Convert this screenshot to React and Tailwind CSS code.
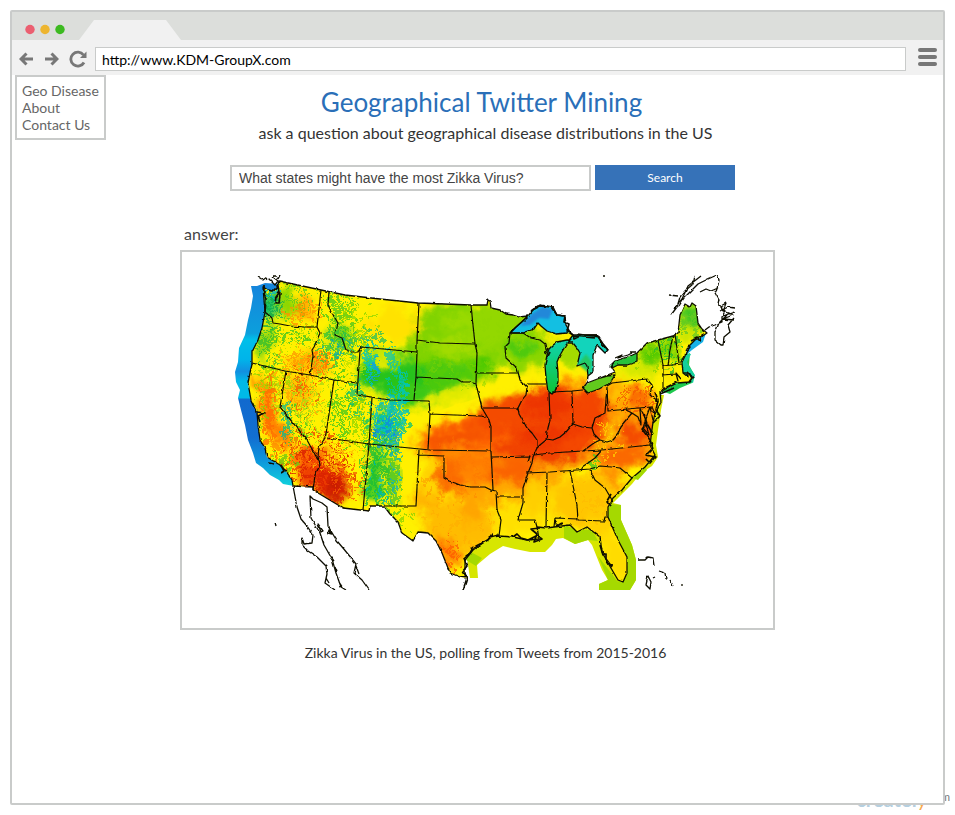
import React from "react";

const LAND =
  "M263 287L268 290L273 291L277 288L279 281L321 290L345 295L380 299L418 303L471 305L487 305L488 300L490 301L491 308L500 310L506 314L513 315L519 317L528 316L533 310L540 305L553 307L557 315L565 316L566 325L570 332L573 335L597 335L602 343L608 350L605 353L597 345L593 355L593 372L588 376L587 383L600 378L615 372L611 366L615 361L628 357L637 353L641 349L647 343L658 340L673 336L678 333L680 315L685 304L690 307L692 303L696 306L698 323L702 329L707 333L701 337L695 340L687 348L685 356L682 362L683 373L688 377L688 372L693 378L690 382L677 383L660 392L661 402L655 414L653 422L650 445L655 455L645 467L638 473L632 478L622 490L613 498L608 507L608 517L618 540L627 557L627 573L623 582L618 580L608 563L602 552L600 537L587 527L577 532L570 525L554 527L547 528L537 527L539 539L527 540L513 537L498 536L490 538L473 550L465 560L465 573L467 578L460 577L450 573L446 563L442 553L436 541L428 533L418 532L413 541L402 533L398 522L390 514L384 506L370 506L369 511L343 508L313 490L313 487L293 486L292 480L286 471L280 465L267 457L265 448L260 440L258 425L257 412L251 400L248 383L252 363L252 352L258 340L262 328L265 312L264 300Z";

const STATES = [
  "M265 312L272 318L273 323L280 324L290 326L305 327L317 327",
  "M321 290L317 327L320 333L314 347L312 350L313 356L310 375",
  "M252 363L285 371L310 375L334 380L357 383",
  "M329 292L328 305L332 313L338 323L335 335L342 338L346 350L351 352L358 352L361 347L417 352",
  "M360 350L357 395L390 400L429 401L430 414L428 449",
  "M419 303L417 340L417 352L416 377L414 400",
  "M417 340L440 343L475 344",
  "M471 305L473 325L475 344L477 352L476 384L480 400L482 408L489 420L491 427L491 451L493 490",
  "M416 377L457 379L462 382L470 382L476 384",
  "M476 373L518 373",
  "M430 414L480 416L486 417",
  "M482 408L517 408L519 412",
  "M327 438L369 444L430 450L491 451",
  "M286 371L280 407L307 440L318 460",
  "M334 380L326 434L325 438L319 447L318 457L320 465L315 475L313 490",
  "M372 397L369 444L363 510",
  "M357 395L372 397",
  "M419 450L416 506L384 506",
  "M419 455L444 456L444 478L449 481L455 483L460 485L470 487L485 487L491 490L496 491L497 510L501 520L499 536",
  "M497 497L521 497",
  "M492 457L530 456L528 462",
  "M510 333L509 343L505 347L506 358L517 368L520 380L527 387L526 395L522 400L518 408L519 414L527 428L532 433L537 440L537 448L533 457L532 463L528 473L523 488L523 503L518 520L535 520L537 527",
  "M510 333L516 327L528 316",
  "M510 333L523 333L531 338L540 340L545 344L546 350",
  "M527 384L546 384",
  "M549 392L550 420L547 432L546 440L540 445L537 448",
  "M546 439L553 440L560 437L566 432L573 424L582 427L592 428L595 418L605 413L607 387",
  "M572 391L573 424",
  "M552 392L572 391L583 390",
  "M607 387L608 411L638 408L652 407L655 414",
  "M607 386L612 383L647 379L652 385L650 395L658 401",
  "M592 428L594 434L600 440L607 442L613 440L618 434L621 426L626 420L632 413L626 410",
  "M534 455L550 453L583 451L602 450L650 445",
  "M583 451L594 443L600 440",
  "M526 473L550 472L590 469L600 466L612 467L620 468L632 478",
  "M602 450L595 458L588 463L582 467L580 470",
  "M590 470L595 480L605 488L612 500",
  "M547 473L546 527",
  "M570 471L577 505L578 520L604 521L605 517L608 517",
  "M554 527L555 518L578 519",
  "M658 340L663 365L663 388",
  "M673 336L670 350L668 366",
  "M675 334L679 363",
  "M662 366L682 364",
  "M662 375L676 374L678 381L676 373L681 379",
  "M632 413L638 417L641 425L640 408L646 419L643 428L649 435L645 421L650 407L653 420",
];

const LAKES = {
  superior:
    "M510 333L515 328L523 321L528 316L533 310L537 308L540 305L553 307L557 315L565 316L566 325L570 332L567 333L556 334L547 331L541 326L538 323L534 329L523 333Z",
  michigan:
    "M557 342L567 340L571 340L566 345L563 350L559 357L557 362L558 372L558 383L555 391L552 394L548 392L546 378L545 365L547 355L549 349L552 346Z",
  huron:
    "M573 335L597 335L602 343L608 350L605 353L597 345L593 355L593 372L588 376L587 366L585 363L577 366L580 353L577 348L573 343L567 343Z",
  erie: "M583 388L587 383L600 378L607 376L615 375L610 383L599 389L588 393Z",
  ontario: "M610 366L615 361L628 357L637 353L637 362L627 365L618 365L612 368Z",
};

const SHORES = [
  "M264 285L264 293L266 299L265 312M273 291L278 286L279 293L276 297L275 303L279 303L280 294L277 292",
  "M531 311L538 306L551 307L557 315L565 316L564 322L569 324L567 331L573 335L574 339L582 335L597 335L603 344L608 350",
  "M545 354L548 348M547 358L550 352M573 336L595 338M577 334L600 337",
  "M257 412L264 413L258 416L260 422M281 465L284 471L281 473M269 463L274 464",
  "M691 341L697 338L700 341L703 333M686 352L690 347L688 345M683 373L689 373L692 378L689 382M661 390L677 382M660 394L674 388",
  "M655 392L658 400L656 410L660 416L653 423M644 414L647 424L642 429L650 440L653 448L646 455L655 457L650 463L646 459",
  "M647 424L653 434M611 494L607 501L611 506M540 528L531 529L537 534L534 542L542 539L536 535M513 537L517 534L521 538L528 540L536 536",
  "M499 535L490 537L492 534L488 540L478 545L473 548L470 553L464 558L467 566L463 571L467 578L463 590",
  "M555 520L557 526L562 523M600 545L603 555L606 553L606 559L612 567",
];

const ABROAD = [
  "M257 276L263 280L267 277M268 278L275 285L278 281L273 277M278 279L280 275M273 276L278 276",
  "M293 486L297 507L301 519L307 526L313 535L312 543L304 544L302 538L302 545L308 551L317 557L326 566L327 574L325 583L335 590",
  "M313 499L310 496L311 518L320 533L324 545L332 559L336 573L341 587L346 590",
  "M313 499L322 503L327 507L328 526L337 541L343 548L352 559L356 564L354 573L362 580L369 590",
  "M318 524L323 531L321 532ZM329 530L332 534L328 533ZM331 557L334 561M335 567L337 572M356 566L359 574M326 578L329 583M339 582L343 588",
  "M275 522L276 526M603 276L605 276",
  "M671 315L677 307L680 297L685 291L693 284L695 276M674 309L682 299L688 286L701 276M679 306L684 298L690 292L698 284L708 279L717 275L719 280L718 285L716 292M700 292L706 289L711 291L718 288M714 291L719 300L718 305L721 306L725 311L722 317L722 322L715 325L709 327L705 330",
  "M669 295L678 296M721 306L726 303L723 311L733 315L723 319L734 320M720 311L728 307L735 308M723 316L734 312M727 315L719 323L715 333L715 340L721 345L723 345L724 337L730 332L728 325L734 318",
  "M615 358L622 355L618 358L628 355L632 353M636 352L630 352",
  "M638 560L645 560L648 557L653 558L654 566M659 571L665 573L666 579M670 580L673 586M648 576L646 585L650 589L651 582ZM653 578L655 577M682 584L682 586",
];

// [cx, cy, rx, ry, colour, rotation]
const FIELD = [
  [455, 345, 50, 45, "#7fd300", 0],
  [500, 325, 40, 25, "#93d800", 0],
  [440, 380, 38, 18, "#4cc90a", 0],
  [390, 374, 32, 22, "#28c31a", 0],
  [415, 395, 22, 12, "#3bc818", 0],
  [455, 347, 26, 10, "#a2dc00", 0],
  [525, 352, 30, 22, "#8cd600", 0],
  [521, 347, 12, 8, "#48c90c", 0],
  [483, 365, 10, 7, "#45c800", 0],
  [454, 322, 16, 8, "#9cdb00", 0],
  [386, 359, 14, 9, "#e5ec00", 0],
  [570, 355, 20, 15, "#a4db00", 0],
  [500, 388, 62, 11, "#fff000", -12],
  [575, 375, 40, 9, "#fff000", 0],
  [445, 405, 30, 8, "#fff000", -18],
  [455, 396, 22, 5, "#d6e800", -18],
  [500, 470, 65, 36, "#ffa800", 0],
  [590, 420, 75, 42, "#ffa200", 0],
  [535, 425, 75, 30, "#ff7800", -8],
  [465, 437, 52, 17, "#ff6600", -10],
  [550, 420, 55, 30, "#f34700", 0],
  [500, 415, 34, 15, "#f44b00", -20],
  [460, 437, 32, 9, "#f55300", -8],
  [545, 450, 55, 14, "#f14200", 0],
  [590, 405, 18, 16, "#f34400", 0],
  [510, 470, 28, 13, "#fa6400", 0],
  [545, 405, 24, 13, "#ed3600", 0],
  [558, 437, 38, 9, "#ed3500", 0],
  [583, 443, 21, 9, "#f54a00", -15],
  [612, 434, 5, 25, "#ffc800", 35],
  [578, 462, 4, 22, "#ffb800", 45],
  [635, 434, 20, 12, "#f44c00", 15],
  [637, 396, 13, 9, "#fb6b00", 0],
  [619, 395, 11, 9, "#ffc300", 0],
  [624, 456, 27, 10, "#fb6800", -10],
  [610, 480, 20, 12, "#ff9100", 30],
  [642, 368, 28, 10, "#d5e800", 0],
  [653, 352, 17, 11, "#54ca00", 0],
  [671, 349, 6, 15, "#63cd00", 0],
  [690, 318, 11, 16, "#3fc622", 0],
  [690, 334, 10, 12, "#cee600", 20],
  [670, 373, 13, 5, "#ffe500", 0],
  [459, 468, 26, 25, "#ff8b00", 0],
  [447, 475, 15, 17, "#fb6a00", 0],
  [475, 463, 20, 10, "#ff7b00", 0],
  [460, 525, 37, 26, "#ffbc00", 0],
  [425, 500, 18, 16, "#ffb500", 0],
  [448, 553, 10, 16, "#ff7900", -30],
  [472, 505, 11, 20, "#ffa500", 0],
  [520, 518, 28, 17, "#ffe000", 0],
  [535, 497, 13, 20, "#ffcf00", 0],
  [586, 502, 36, 26, "#ffc600", 0],
  [600, 528, 16, 13, "#ffd000", 0],
  [616, 555, 12, 26, "#ffdc00", -20],
  [430, 475, 9, 24, "#ffd400", 0],
  [405, 475, 10, 30, "#fff000", 0],
  [303, 310, 12, 12, "#ffb000", 0],
  [266, 340, 7, 17, "#6fd019", 20],
  [270, 305, 11, 14, "#18c163", 0],
  [287, 302, 8, 17, "#87d500", 0],
  [305, 361, 18, 8, "#ffb400", -20],
  [320, 365, 14, 6, "#ffa300", 35],
  [267, 403, 8, 29, "#ff8300", -15],
  [279, 432, 9, 21, "#ff7b00", -35],
  [298, 390, 14, 17, "#ffc600", 0],
  [340, 335, 11, 13, "#72d121", 0],
  [386, 426, 12, 15, "#3ccb62", 0],
  [376, 475, 9, 27, "#31c726", 8],
  [394, 480, 5, 20, "#7ad314", 0],
  [312, 462, 17, 18, "#fb6500", -35],
  [329, 483, 20, 15, "#e52d00", 25],
  [335, 488, 12, 11, "#c91c00", 0],
  [308, 475, 10, 9, "#ee3c00", 0],
  [395, 325, 29, 17, "#ffe200", 0],
];

// [cx, cy, rx, ry, count, width, height, colour]
const GRAIN = [
  [290, 300, 30, 18, 120, 1, 3, "#5acb1e"],
  [270, 308, 10, 20, 60, 2, 2, "#12a94c"],
  [272, 292, 8, 6, 25, 2, 2, "#00b7c6"],
  [302, 312, 18, 14, 90, 2, 2, "#ff9000"],
  [267, 343, 12, 24, 110, 2, 2, "#35bd2c"],
  [295, 342, 32, 20, 170, 2, 1, "#a8da00"],
  [293, 335, 26, 9, 60, 2, 2, "#3ec41f"],
  [300, 360, 26, 14, 120, 2, 2, "#ff9800"],
  [320, 362, 16, 12, 70, 2, 2, "#ff6f00"],
  [338, 313, 16, 28, 210, 2, 2, "#4bc51d"],
  [338, 347, 22, 18, 160, 2, 2, "#2ec23c"],
  [340, 350, 18, 12, 30, 2, 2, "#00a9ae"],
  [356, 330, 18, 32, 140, 2, 2, "#8ad500"],
  [366, 340, 22, 12, 80, 2, 2, "#2dbf55"],
  [352, 362, 18, 20, 110, 2, 1, "#b4dc00"],
  [370, 362, 6, 22, 90, 2, 2, "#00c6bd"],
  [373, 370, 5, 14, 30, 2, 2, "#0d9edb"],
  [390, 358, 4, 13, 40, 2, 2, "#0cc6a6"],
  [400, 385, 12, 18, 50, 2, 3, "#04c69c"],
  [297, 390, 26, 30, 210, 1, 3, "#ffa300"],
  [306, 400, 34, 40, 260, 1, 4, "#a5d80f"],
  [300, 385, 22, 22, 60, 1, 4, "#f65a00"],
  [272, 378, 18, 16, 100, 2, 2, "#a3d800"],
  [267, 405, 7, 34, 110, 2, 3, "#ff6800"],
  [286, 420, 5, 20, 80, 2, 2, "#0bb78b"],
  [300, 428, 14, 22, 60, 1, 3, "#45c41d"],
  [260, 412, 6, 40, 60, 1, 3, "#88d100"],
  [341, 408, 12, 36, 150, 2, 2, "#40c51c"],
  [354, 397, 9, 22, 80, 2, 2, "#09bd72"],
  [359, 420, 12, 26, 110, 2, 2, "#8bd400"],
  [386, 423, 21, 28, 270, 2, 2, "#11c370"],
  [388, 420, 15, 26, 170, 2, 3, "#00bccc"],
  [386, 432, 14, 15, 70, 2, 2, "#1687df"],
  [401, 397, 5, 34, 100, 2, 3, "#06c4c0"],
  [375, 472, 14, 40, 210, 2, 3, "#1dbd36"],
  [392, 477, 8, 40, 130, 2, 3, "#4cc725"],
  [377, 485, 10, 30, 24, 2, 3, "#00b9b2"],
  [393, 463, 6, 36, 34, 2, 3, "#15b1b7"],
  [397, 519, 14, 12, 18, 2, 2, "#88d400"],
  [310, 458, 34, 28, 280, 2, 2, "#ed3c00"],
  [322, 475, 29, 28, 260, 2, 2, "#d92300"],
  [338, 455, 28, 16, 120, 2, 2, "#ffbd00"],
  [348, 482, 15, 18, 80, 2, 2, "#f35a00"],
  [279, 446, 16, 20, 80, 2, 2, "#ff8a00"],
  [282, 463, 15, 12, 70, 2, 2, "#68cd13"],
  [455, 470, 34, 30, 70, 3, 3, "#fc7600"],
  [455, 525, 40, 34, 70, 3, 3, "#ffa200"],
  [450, 555, 9, 22, 50, 2, 2, "#ff6000"],
  [595, 500, 30, 25, 50, 3, 3, "#ffb300"],
  [608, 438, 15, 18, 50, 2, 2, "#ffd000"],
  [592, 462, 5, 5, 20, 2, 2, "#43c91d"],
  [653, 353, 24, 15, 70, 2, 2, "#8bd500"],
  [668, 352, 12, 19, 50, 2, 2, "#1fb92c"],
  [690, 317, 12, 19, 60, 2, 2, "#67ca21"],
  [637, 400, 20, 14, 80, 2, 2, "#f65900"],
  [470, 340, 52, 36, 60, 4, 4, "#8fd700"],
  [450, 375, 38, 17, 50, 4, 3, "#64cd05"],
];

function grainPath([cx, cy, rx, ry, count, w, h], seed) {
  let s = seed * 7919 + 17;
  const next = () => {
    s = (s * 1103515245 + 12345) % 2147483648;
    return s / 2147483648;
  };
  let d = "";
  for (let i = 0; i < count; i++) {
    const a = next() * Math.PI * 2;
    const r = Math.pow(next(), 0.75) * 1.1;
    const x = Math.round(cx + Math.cos(a) * r * rx);
    const y = Math.round(cy + Math.sin(a) * r * ry);
    d += `M${x} ${y}h${w}v${h}h-${w}z`;
  }
  return d;
}

function HeatMap() {
  return (
    <svg viewBox="235 275 500 315" className="block h-auto w-full" role="img" aria-label="Heat map of the United States">
      <defs>
        <clipPath id="land"><path d={LAND} /></clipPath>
        <filter id="field" x="-40%" y="-40%" width="180%" height="180%">
          <feGaussianBlur stdDeviation="4" result="soft" />
          <feTurbulence type="fractalNoise" baseFrequency="0.07" numOctaves="4" seed="4" result="noise" />
          <feDisplacementMap in="soft" in2="noise" scale="22" xChannelSelector="R" yChannelSelector="G" />
        </filter>
        <filter id="grain" filterUnits="userSpaceOnUse" x="230" y="270" width="510" height="325">
          <feTurbulence type="fractalNoise" baseFrequency="0.12" numOctaves="3" seed="6" result="noise" />
          <feDisplacementMap in="SourceGraphic" in2="noise" scale="14" xChannelSelector="R" yChannelSelector="G" />
          <feGaussianBlur stdDeviation="0.45" />
        </filter>
        <filter id="soft"><feGaussianBlur stdDeviation="1" /></filter>
        <filter id="coast" filterUnits="userSpaceOnUse" x="230" y="270" width="510" height="325">
          <feTurbulence type="fractalNoise" baseFrequency="0.2" numOctaves="1" seed="9" result="noise" />
          <feDisplacementMap in="SourceGraphic" in2="noise" scale="3" xChannelSelector="R" yChannelSelector="G" />
        </filter>
        <linearGradient id="pacific" gradientUnits="userSpaceOnUse" x1="0" y1="285" x2="0" y2="486">
          <stop offset="0" stopColor="#1585dc" />
          <stop offset="0.24" stopColor="#0c9fdc" />
          <stop offset="0.27" stopColor="#00bfea" />
          <stop offset="0.37" stopColor="#00b4ea" />
          <stop offset="0.43" stopColor="#128fe0" />
          <stop offset="0.48" stopColor="#00b9e8" />
          <stop offset="0.56" stopColor="#00b9e8" />
          <stop offset="0.57" stopColor="#1169ce" />
          <stop offset="0.76" stopColor="#126fd1" />
          <stop offset="0.87" stopColor="#0d94dc" />
          <stop offset="1" stopColor="#10d2dc" />
        </linearGradient>
        <linearGradient id="michigan" x1="0" y1="0" x2="0" y2="1">
          <stop offset="0" stopColor="#10d3b1" />
          <stop offset="1" stopColor="#0fc333" />
        </linearGradient>
      </defs>

      <path fill="url(#pacific)" d="M251 286L257 286L265 283L280 284L280 300L270 380L270 440L294 474L294 486L283 484L279 480L270 475L263 468L256 463L253 453L248 440L245 425L241 410L238 398L240 390L236 382L235 372L238 362L239 348L245 335L248 320L251 308L253 296Z" />
      <path fill="#d7e600" d="M466 552L470 578L478 578L477 565L490 554L503 546L515 549L530 552L545 552L552 545L556 539L563 538L575 544L588 540L592 545L602 570L608 580L599 584L599 590L630 590L636 580L636 560L632 545L621 520L621 505L613 503L623 493L632 484L640 474L652 466L658 457L656 445L658 430L661 410L664 395L640 395L600 500L500 525Z" />
      <path fill="#a5d900" d="M564 525L564 538L575 544L588 540L598 541L592 530L578 530ZM598 556L608 580L599 584L599 590L630 590L636 580L636 560L632 545L621 520L621 505L610 504L606 517L628 565L618 582ZM469 551L482 558L476 566L466 560ZM632 478L638 480L647 470L644 466Z" />
      <path fill="#1fc94e" d="M661 391L670 394L680 388L692 383L694 374L689 365L690 353L680 358L678 382Z" />
      <path fill="#14cf9c" d="M684 353L691 354L687 362L690 368L695 375L693 383L688 381L680 368Z" />
      <path fill="#17b1e6" d="M691 341L706 333L703 342L692 350L685 356Z" />

      <g clipPath="url(#land)">
        <rect x="235" y="275" width="500" height="315" fill="#fff100" />
        {FIELD.map(([cx, cy, rx, ry, fill, rot], i) => (
          <ellipse key={i} cx={cx} cy={cy} rx={rx} ry={ry} fill={fill} transform={`rotate(${rot} ${cx} ${cy})`} filter="url(#field)" />
        ))}
        <g filter="url(#grain)">
          {GRAIN.map((g, i) => (
            <path key={i} d={grainPath(g, i + 3)} fill={g[7]} opacity={g[5] > 2 ? 0.35 : 0.75} />
          ))}
        </g>
      </g>

      <path d={LAKES.superior} fill="#13bfe2" />
      <path d="M520 326L532 314L542 307L553 309L549 319L539 318L530 325Z" fill="#2388d9" filter="url(#soft)" />
      <path d={LAKES.michigan} fill="url(#michigan)" />
      <path d={LAKES.huron} fill="#12d4bb" />
      <path d="M578 364L586 354L592 362L590 374Z" fill="#23c966" filter="url(#soft)" />
      <path d={LAKES.erie} fill="#62ca1d" />
      <path d={LAKES.ontario} fill="#27c13b" />
      <path d="M588 377L611 367L615 372L605 376L590 382L585 386Z" fill="white" />

      <g fill="none" stroke="#0d0d00" strokeLinejoin="round">
        <path d={STATES.join("")} strokeWidth="1.2" filter="url(#coast)" />
        <path d={LAND + Object.values(LAKES).join("")} strokeWidth="1.3" filter="url(#coast)" />
        <path d={SHORES.join("")} strokeWidth="1.7" filter="url(#coast)" />
        <path d={ABROAD.join("")} strokeWidth="1.3" filter="url(#coast)" />
      </g>
    </svg>
  );
}

function BrowserBar() {
  return (
    <header>
      <div className="flex h-7 items-end bg-[#dcdedb]">
        <svg width="172" height="28" viewBox="0 0 172 28" aria-hidden="true">
          <circle cx="18" cy="17.500" r="4.700" fill="#eb5f70" />
          <circle cx="33" cy="17.500" r="4.700" fill="#edb52f" />
          <circle cx="48" cy="17.500" r="4.700" fill="#3cba20" />
          <path d="M67 28L82 8H154L169 28Z" fill="#f1f1f1" />
        </svg>
      </div>
      <div className="flex h-[35px] items-center bg-[#f1f1f1] pl-[7px] pr-1.5 pt-[3px]">
        <button type="button" aria-label="Back" className="mr-3">
          <svg width="14" height="14" viewBox="0 0 14 14" fill="none" stroke="#777" strokeWidth="3" className="block">
            <path d="M7.500 1.500L2 7L7.500 12.500M2.500 7H14" strokeLinejoin="miter" />
          </svg>
        </button>
        <button type="button" aria-label="Forward" className="mr-2.5">
          <svg width="14" height="14" viewBox="0 0 14 14" fill="none" stroke="#777" strokeWidth="3" className="block">
            <path d="M6.500 1.500L12 7L6.500 12.500M11.500 7H0" strokeLinejoin="miter" />
          </svg>
        </button>
        <button type="button" aria-label="Reload" className="mr-2">
          <svg width="18" height="18" viewBox="0 0 18 18" fill="none" className="block">
            <path d="M14.500 5A7 7 0 1 0 15 12.500" stroke="#777" strokeWidth="2.800" />
            <path d="M17.500 1.500V8H11Z" fill="#777" />
          </svg>
        </button>
        <input
          type="text"
          aria-label="Address"
          defaultValue="http://www.KDM-GroupX.com"
          className="h-6 min-w-0 flex-1 border border-[#c9cbca] bg-white px-1.5 text-sm text-black outline-none"
        />
        <button type="button" aria-label="Menu" className="ml-3 flex w-[19px] flex-col gap-[3px] pb-1">
          <span className="h-1 w-full rounded-full bg-[#777]" />
          <span className="h-1 w-full rounded-full bg-[#777]" />
          <span className="h-1 w-full rounded-full bg-[#777]" />
        </button>
      </div>
    </header>
  );
}

export default function App() {
  return (
    <div className="relative flex min-h-screen flex-col bg-white p-2.5 font-['Lato',sans-serif] text-[#333]">
      <div className="absolute bottom-0.5 right-[5px] flex items-baseline text-xl leading-7 text-[#b5cfdf]" aria-hidden="true">
        <span className="font-bold">createl</span>
        <span className="text-[#f9a94a]">y</span>
        <span className="self-start text-[11px] leading-6 text-[#777]">.com</span>
      </div>
      <div className="relative flex flex-1 flex-col rounded-xs border-2 border-[#c9cbca] bg-white">
        <BrowserBar />
        <div className="grid">
          <nav className="z-10 col-start-1 row-start-1 ml-[3px] flex flex-col self-start justify-self-start border-2 border-[#c9cbca] bg-white px-[5px] py-[5px] text-sm leading-[17px] text-[#666]">
            <a href="#geo">Geo Disease</a>
            <a href="#about">About</a>
            <a href="#contact">Contact Us</a>
          </nav>
          <main className="col-start-1 row-start-1 mx-auto flex w-full max-w-[595px] flex-col pt-[11px]">
            <h1 className="pl-2 text-center text-[26px] leading-8 text-[#2a6fb8]">Geographical Twitter Mining</h1>
            <p className="mt-[3px] pl-4 text-center text-base leading-6">
              ask a question about geographical disease distributions in the US
            </p>
            <form className="ml-[50px] mr-10 mt-5 flex items-start gap-1" onSubmit={(e) => e.preventDefault()}>
              <input
                type="text"
                aria-label="Question"
                defaultValue="What states might have the most Zikka Virus?"
                className="h-[26px] min-w-0 flex-1 border-2 border-[#c9cbca] bg-white px-[7px] font-['Liberation_Sans',sans-serif] text-sm text-[#444] outline-none"
              />
              <button type="submit" className="h-[25px] w-[140px] bg-[#3672b8] text-xs text-white">
                Search
              </button>
            </form>
            <h2 className="mt-[31px] pl-1 text-base leading-6 text-[#444]">answer:</h2>
            <figure className="mt-1">
              <div className="border-2 border-[#c9cbca] pb-[38px] pl-[53px] pr-[38px] pt-[23px]">
                <HeatMap />
              </div>
              <figcaption className="mt-[11px] pl-4 text-center text-sm leading-6">
                Zikka Virus in the US, polling from Tweets from 2015-2016
              </figcaption>
            </figure>
          </main>
        </div>
      </div>
    </div>
  );
}
